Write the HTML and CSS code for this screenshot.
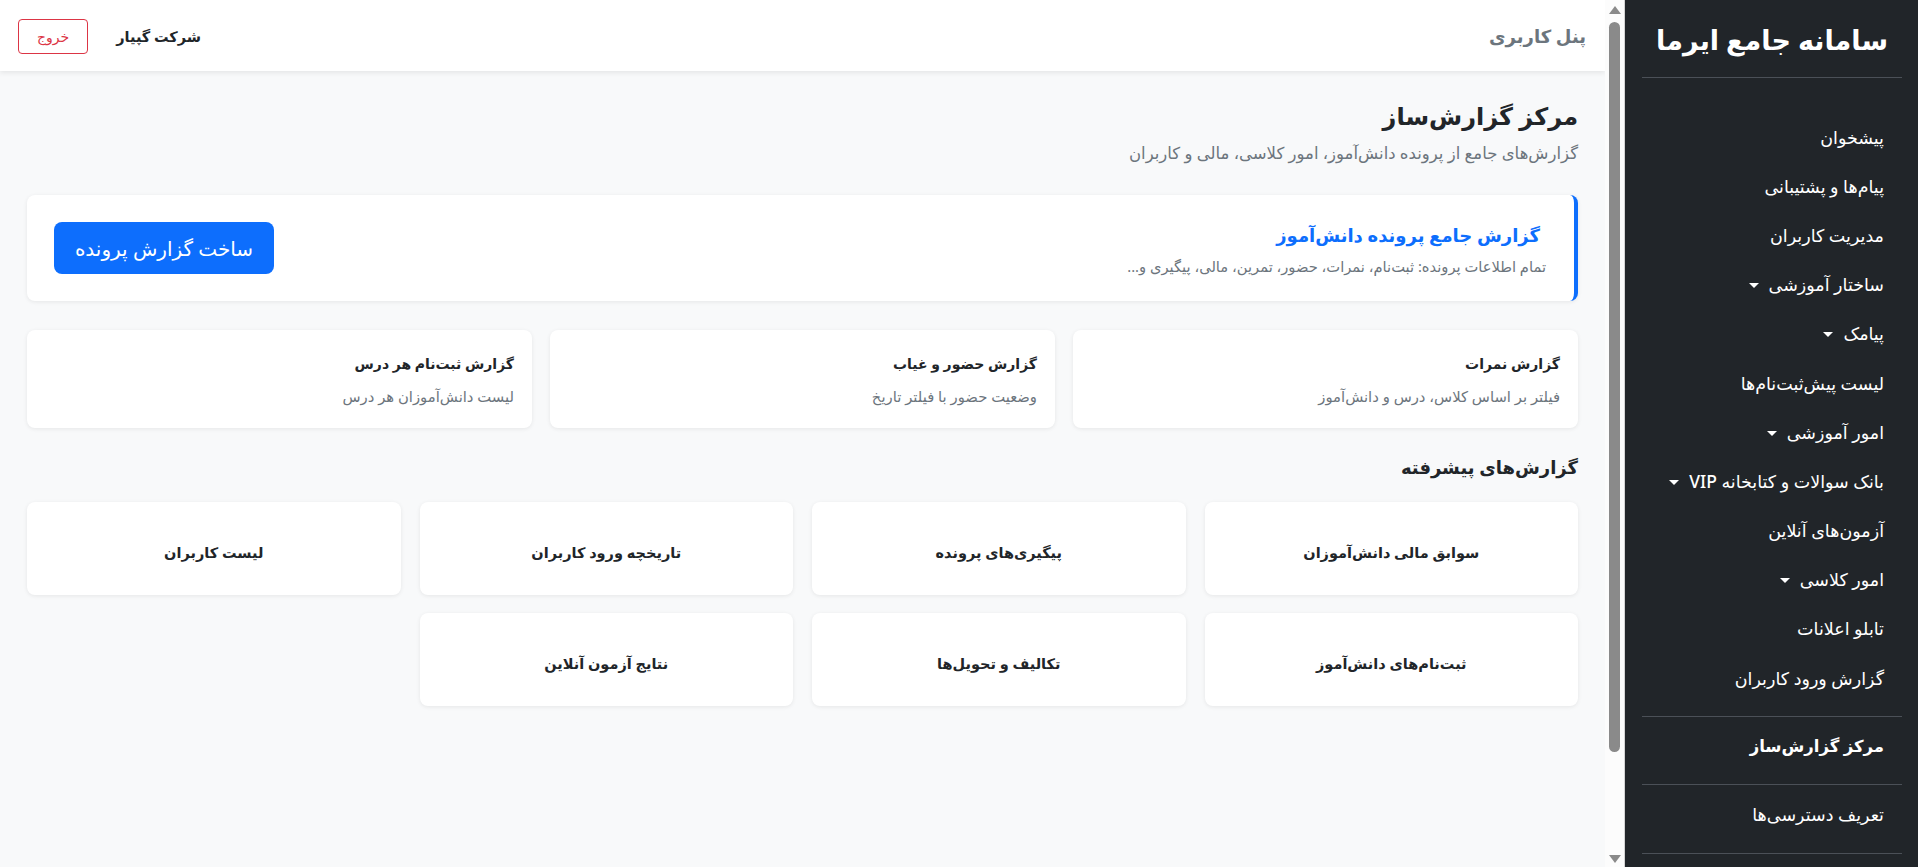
FILE: index.html
```html
<!DOCTYPE html>
<html lang="fa" dir="rtl">
<head>
  <meta charset="UTF-8">
  <meta name="viewport" content="width=device-width, initial-scale=1.0">
  <title>مرکز گزارش‌ساز</title>
  <link rel="stylesheet" href="styles.css">
</head>
<body>
  <aside class="sidebar">
    <div class="brand">سامانه جامع ایرما</div>
    <hr class="side-hr">
    <ul class="side-nav">
      <li><a href="#">پیشخوان</a></li>
      <li><a href="#">پیام‌ها و پشتیبانی</a></li>
      <li><a href="#">مدیریت کاربران</a></li>
      <li><a href="#" class="toggle">ساختار آموزشی</a></li>
      <li><a href="#" class="toggle">پیامک</a></li>
      <li><a href="#">لیست پیش‌ثبت‌نام‌ها</a></li>
      <li><a href="#" class="toggle">امور آموزشی</a></li>
      <li><a href="#" class="toggle">بانک سوالات و کتابخانه VIP</a></li>
      <li><a href="#">آزمون‌های آنلاین</a></li>
      <li><a href="#" class="toggle">امور کلاسی</a></li>
      <li><a href="#">تابلو اعلانات</a></li>
      <li><a href="#">گزارش ورود کاربران</a></li>
    </ul>
    <hr class="side-hr">
    <ul class="side-nav">
      <li><a href="#" class="active">مرکز گزارش‌ساز</a></li>
    </ul>
    <hr class="side-hr">
    <ul class="side-nav">
      <li><a href="#">تعریف دسترسی‌ها</a></li>
    </ul>
    <hr class="side-hr">
  </aside>

  <div class="scrollbar">
    <span class="arrow-up"></span>
    <span class="thumb"></span>
    <span class="arrow-down"></span>
  </div>

  <main class="main">
    <header class="topbar">
      <div class="panel-title">پنل کاربری</div>
      <div class="topbar-user">
        <span class="company">شرکت گپیار</span>
        <button class="btn-logout">خروج</button>
      </div>
    </header>

    <div class="content">
      <div class="page-head">
        <h1>مرکز گزارش‌ساز</h1>
        <p>گزارش‌های جامع از پرونده دانش‌آموز، امور کلاسی، مالی و کاربران</p>
      </div>

      <div class="card featured">
        <div>
          <h2>گزارش جامع پرونده دانش‌آموز</h2>
          <p>تمام اطلاعات پرونده: ثبت‌نام، نمرات، حضور، تمرین، مالی، پیگیری و...</p>
        </div>
        <button class="btn-primary">ساخت گزارش پرونده</button>
      </div>

      <div class="report-row">
        <div class="card report">
          <h3>گزارش نمرات</h3>
          <p>فیلتر بر اساس کلاس، درس و دانش‌آموز</p>
        </div>
        <div class="card report">
          <h3>گزارش حضور و غیاب</h3>
          <p>وضعیت حضور با فیلتر تاریخ</p>
        </div>
        <div class="card report">
          <h3>گزارش ثبت‌نام هر درس</h3>
          <p>لیست دانش‌آموزان هر درس</p>
        </div>
      </div>

      <h2 class="section-title">گزارش‌های پیشرفته</h2>

      <div class="adv-grid">
        <div class="card adv">سوابق مالی دانش‌آموزان</div>
        <div class="card adv">پیگیری‌های پرونده</div>
        <div class="card adv">تاریخچه ورود کاربران</div>
        <div class="card adv">لیست کاربران</div>
        <div class="card adv">ثبت‌نام‌های دانش‌آموز</div>
        <div class="card adv">تکالیف و تحویل‌ها</div>
        <div class="card adv">نتایج آزمون آنلاین</div>
      </div>
    </div>
  </main>
</body>
</html>
```

FILE: styles.css
```css
* {
  box-sizing: border-box;
}

body {
  margin: 0;
  height: 100vh;
  display: flex;
  direction: rtl;
  overflow: hidden;
  font-family: "Noto Sans", "DejaVu Sans", sans-serif;
  color: #212529;
  background-color: #f8f9fa;
}

/* sidebar */
.sidebar {
  width: 293px;
  flex-shrink: 0;
  background-color: #212529;
  color: #fff;
  padding: 0 16px 0 17px;
  overflow: hidden;
}

.brand {
  padding-top: 22px;
  font-size: 27px;
  line-height: 36px;
  font-weight: bold;
  text-align: center;
}

.side-hr {
  border: none;
  border-top: 1px solid #4b5057;
  margin: 14px 0 4px;
}

.brand + .side-hr {
  margin: 19px 0 34px;
}

.side-nav {
  list-style: none;
  margin: 0;
  padding: 0;
}

.side-nav a {
  display: block;
  padding: 12.6px 18px;
  font-size: 17.5px;
  line-height: 24px;
  font-weight: 500;
  color: #fff;
  text-decoration: none;
}

.side-nav a.active {
  font-weight: bold;
  font-size: 16.5px;
}

.toggle::after {
  content: "";
  display: inline-block;
  vertical-align: 3px;
  margin-right: 10px;
  border-top: 5px solid #fff;
  border-left: 5px solid transparent;
  border-right: 5px solid transparent;
}

/* fake scrollbar of the main area */
.scrollbar {
  width: 20px;
  flex-shrink: 0;
  background-color: #fcfcfc;
  border-right: 1px solid #d4d4d4;
  display: flex;
  flex-direction: column;
  align-items: center;
  padding: 6px 0 4px;
}

.arrow-up {
  border-bottom: 8px solid #8a8a8a;
  border-left: 6px solid transparent;
  border-right: 6px solid transparent;
}

.thumb {
  width: 11px;
  height: 730px;
  margin-top: 8px;
  border-radius: 6px;
  background-color: #8a8a8a;
}

.arrow-down {
  margin-top: auto;
  border-top: 8px solid #8a8a8a;
  border-left: 6px solid transparent;
  border-right: 6px solid transparent;
}

/* main */
.main {
  flex: 1;
  overflow: hidden;
  background-color: #f8f9fa;
}

.topbar {
  height: 71px;
  background-color: #fff;
  box-shadow: 0 2px 5px rgba(0, 0, 0, 0.08);
  display: flex;
  justify-content: space-between;
  align-items: center;
  padding: 0 19px 0 18px;
  position: relative;
}

.panel-title {
  font-size: 18px;
  font-weight: 600;
  color: #6c757d;
}

.topbar-user {
  display: flex;
  align-items: center;
  gap: 28px;
}

.company {
  font-size: 14.5px;
  font-weight: bold;
}

.btn-logout {
  font-family: inherit;
  font-size: 14px;
  color: #dc3545;
  background: #fff;
  border: 1px solid #dc3545;
  border-radius: 4px;
  padding: 0 18px;
  height: 35px;
  margin-top: 2px;
}

.content {
  padding: 28px 27px;
}

.page-head {
  margin-bottom: 30px;
}

.page-head h1 {
  margin: 0 0 8px;
  font-size: 24px;
  line-height: 34px;
  font-weight: bold;
}

.page-head p {
  margin: 0;
  font-size: 16.5px;
  line-height: 24px;
  color: #6c757d;
}

.card {
  background-color: #fff;
  border-radius: 8px;
  box-shadow: 0 1px 4px rgba(0, 0, 0, 0.08);
}

.featured {
  height: 106px;
  display: flex;
  justify-content: space-between;
  align-items: center;
  padding: 0 28px 0 27px;
  border-right: 4px solid #0d6efd;
  margin-bottom: 29px;
}

.featured h2 {
  margin: 0 0 6px;
  padding-right: 6px;
  font-size: 18px;
  line-height: 30px;
  font-weight: bold;
  color: #0d6efd;
}

.featured p {
  margin: 0;
  font-size: 14.7px;
  line-height: 21px;
  color: #6c757d;
}

.btn-primary {
  font-family: inherit;
  font-size: 20px;
  color: #fff;
  background-color: #0d6efd;
  border: none;
  border-radius: 8px;
  width: 220px;
  height: 52px;
}

.report-row {
  display: grid;
  grid-template-columns: repeat(3, 1fr);
  gap: 18px;
}

.report {
  height: 98px;
  padding: 22px 18px 0;
}

.report h3 {
  margin: 0 0 10px;
  font-size: 14px;
  line-height: 24px;
  font-weight: bold;
}

.report p {
  margin: 0;
  font-size: 14.8px;
  line-height: 21px;
  color: #6c757d;
}

.section-title {
  margin: 24px 0 20px;
  font-size: 18px;
  line-height: 30px;
  font-weight: bold;
}

.adv-grid {
  display: grid;
  grid-template-columns: repeat(4, 1fr);
  gap: 18px 19px;
}

.adv {
  height: 93px;
  padding-top: 38px;
  text-align: center;
  font-size: 14.5px;
  line-height: 24px;
  font-weight: bold;
}
```
